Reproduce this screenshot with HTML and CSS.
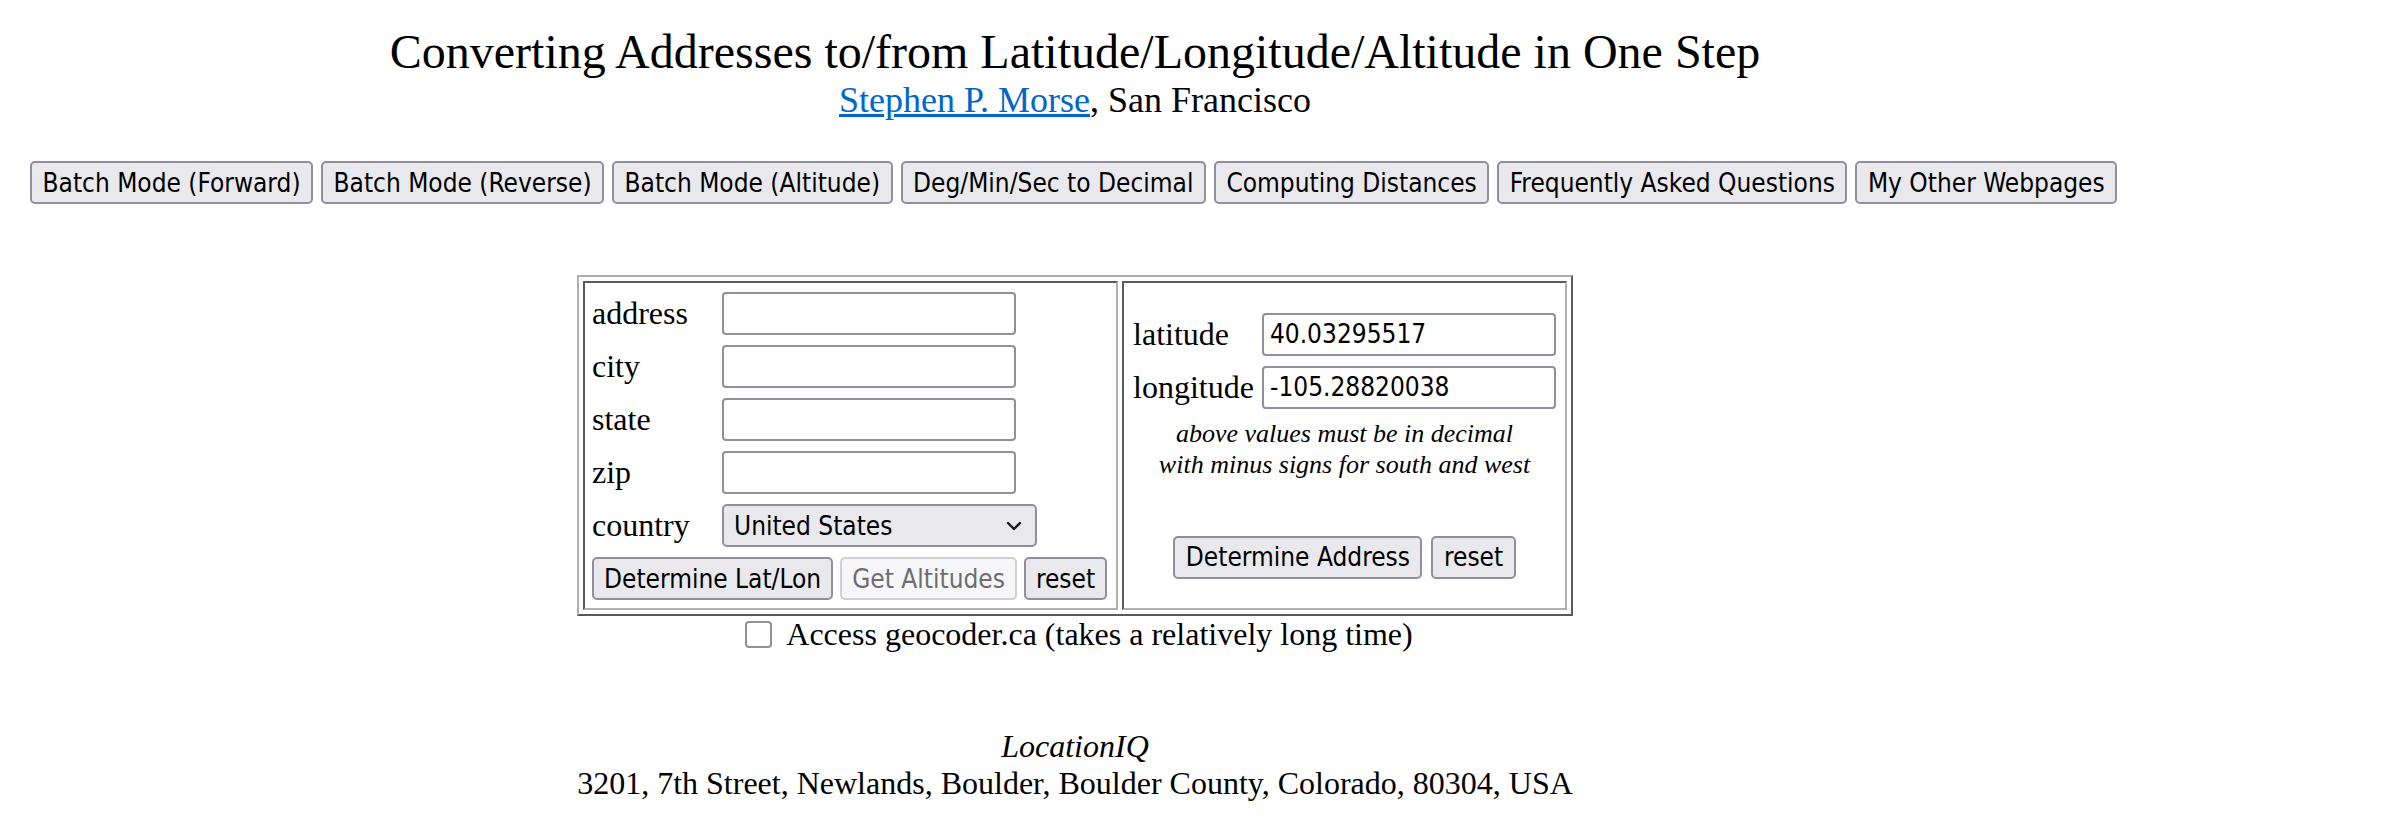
FILE: index.html
```html
<!DOCTYPE html>
<html lang="en">
<head>
<meta charset="utf-8">
<title>Converting Addresses to/from Latitude/Longitude/Altitude in One Step</title>
<link rel="stylesheet" href="styles.css">
</head>
<body>
<div class="page">
  <h1 class="title">Converting Addresses to/from Latitude/Longitude/Altitude in One Step</h1>
  <div class="byline"><a href="#">Stephen P. Morse</a>, San Francisco</div>

  <div class="nav">
    <button class="btn">Batch Mode (Forward)</button>
    <button class="btn">Batch Mode (Reverse)</button>
    <button class="btn">Batch Mode (Altitude)</button>
    <button class="btn">Deg/Min/Sec to Decimal</button>
    <button class="btn">Computing Distances</button>
    <button class="btn">Frequently Asked Questions</button>
    <button class="btn">My Other Webpages</button>
  </div>

  <div class="frame">
    <div class="cell cell-left">
      <div class="form-grid">
        <label class="lbl">address</label><input class="field" type="text">
        <label class="lbl">city</label><input class="field" type="text">
        <label class="lbl">state</label><input class="field" type="text">
        <label class="lbl">zip</label><input class="field" type="text">
        <label class="lbl">country</label>
        <div class="select"><span>United States</span>
          <svg class="chev" width="16" height="10" viewBox="0 0 16 10"><path d="M2 2 L8 8 L14 2" fill="none" stroke="#1a1a1a" stroke-width="2.4" stroke-linecap="round" stroke-linejoin="round"/></svg>
        </div>
        <div class="btn-row btn-row-left span2">
          <button class="btn">Determine Lat/Lon</button>
          <button class="btn" disabled>Get Altitudes</button>
          <button class="btn">reset</button>
        </div>
      </div>
    </div>
    <div class="cell cell-right">
      <div class="coord-grid">
        <label class="lbl">latitude</label><input class="field" type="text" value="40.03295517">
        <label class="lbl">longitude</label><input class="field" type="text" value="-105.28820038">
      </div>
      <div class="note">above values must be in decimal<br>with minus signs for south and west</div>
      <div class="btn-row btn-row-right">
        <button class="btn">Determine Address</button>
        <button class="btn">reset</button>
      </div>
    </div>
  </div>

  <div class="check-row"><input type="checkbox" class="check"><span>Access geocoder.ca (takes a relatively long time)</span></div>

  <div class="result">
    <div class="source">LocationIQ</div>
    <div class="address">3201, 7th Street, Newlands, Boulder, Boulder County, Colorado, 80304, USA</div>
  </div>
</div>
</body>
</html>
```
FILE: styles.css
```css
html, body {
  margin: 0;
  padding: 0;
  background: #ffffff;
}
body {
  font-family: "Liberation Serif", "Times New Roman", serif;
  font-size: 32px;
  color: #000;
}
.page {
  width: 2118px;
  margin-left: 16px;
  padding-top: 24px;
}
.title {
  margin: 0;
  font-size: 48px;
  font-weight: normal;
  text-align: center;
  line-height: normal;
}
.byline {
  text-align: center;
  font-size: 36px;
}
.byline a {
  color: #0066cc;
}
.btn {
  font-family: "DejaVu Sans Condensed", "DejaVu Sans", sans-serif;
  font-stretch: condensed;
  font-size: 26px;
  height: 43px;
  box-sizing: border-box;
  padding: 0 10.5px;
  margin: 0;
  border: 2px solid #8f8f9d;
  border-radius: 5px;
  background: #e9e9ed;
  color: #000;
  white-space: nowrap;
}
.btn:disabled {
  background: #f6f6f8;
  border-color: #cfcfd6;
  color: #6d6d6d;
}
.nav {
  display: flex;
  gap: 8px;
  margin-top: 40px;
  padding-left: 14px;
}
.frame {
  display: flex;
  gap: 4px;
  width: max-content;
  margin: 71px auto 0;
  padding: 4px;
  border: 2px solid;
  border-color: #b0b0b0 #5a5a5a #5a5a5a #b0b0b0;
}
.cell {
  box-sizing: border-box;
  border: 2px solid;
  border-color: #5a5a5a #b0b0b0 #b0b0b0 #5a5a5a;
}
.cell-left {
  width: 535px;
  padding: 9px 7px 8px 7px;
}
.cell-right {
  width: 445px;
  display: flex;
  flex-direction: column;
  align-items: center;
  justify-content: center;
}
.form-grid {
  display: grid;
  grid-template-columns: 122px auto;
  column-gap: 8px;
  row-gap: 10px;
  align-items: center;
  justify-items: start;
}
.coord-grid {
  display: grid;
  grid-template-columns: auto auto;
  column-gap: 8px;
  row-gap: 10px;
  align-items: center;
}
.span2 {
  grid-column: 1 / 3;
}
.field {
  width: 294px;
  height: 43px;
  box-sizing: border-box;
  margin: 0;
  padding: 0 6px;
  border: 2px solid #8f8f9d;
  border-radius: 4px;
  background: #fff;
  font-family: "DejaVu Sans Condensed", "DejaVu Sans", sans-serif;
  font-stretch: condensed;
  font-size: 26px;
  color: #000;
}
.select {
  width: 315px;
  height: 43px;
  box-sizing: border-box;
  display: flex;
  align-items: center;
  justify-content: space-between;
  padding: 0 13px 0 10px;
  border: 2px solid #8f8f9d;
  border-radius: 5px;
  background: #e9e9ed;
  font-family: "DejaVu Sans Condensed", "DejaVu Sans", sans-serif;
  font-stretch: condensed;
  font-size: 26px;
}
.btn-row {
  display: flex;
  gap: 9px;
}
.btn-row-left {
  gap: 7px;
}
.btn-row-left .btn {
  padding: 0 10px;
}
.note {
  margin-top: 9px;
  font-size: 26px;
  font-style: italic;
  text-align: center;
  line-height: 31px;
}
.btn-row-right {
  margin-top: 56px;
}
.check-row {
  display: flex;
  align-items: center;
  justify-content: center;
  height: 37px;
  padding-left: 8px;
}
.check {
  appearance: none;
  -webkit-appearance: none;
  width: 27px;
  height: 27px;
  box-sizing: border-box;
  margin: 0 14px 0 0;
  border: 2px solid #8f8f9d;
  border-radius: 4px;
  background: #fff;
}
.result {
  margin-top: 75px;
  text-align: center;
}
.source {
  font-style: italic;
}
```
